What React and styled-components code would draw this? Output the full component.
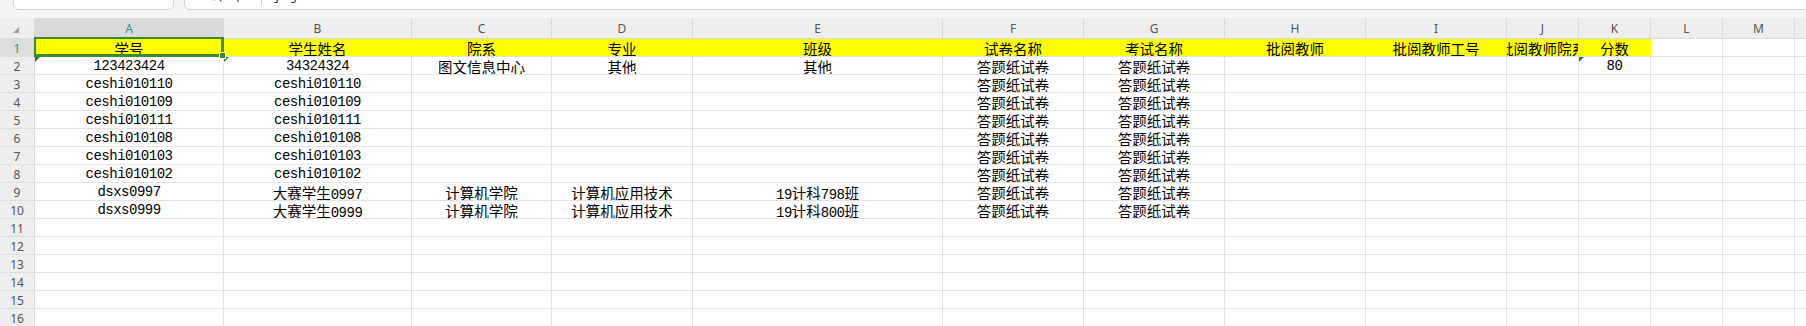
import React from 'react';
import styled, { createGlobalStyle } from 'styled-components';
import { Search } from 'lucide-react';

const Global = createGlobalStyle`
  html, body { margin: 0; padding: 0; background: #ffffff; overflow: hidden; }
  #root { width: 1806px; height: 326px; overflow: hidden; }
`;

const GREEN = '#3b8a2c';
const ACCENT = '#1f9b7b';
const GRID = '#e2e2e2';
const YELLOW = '#ffff00';

const COLS = [
  { key: 'A', w: 189 }, { key: 'B', w: 188 }, { key: 'C', w: 140 }, { key: 'D', w: 141 },
  { key: 'E', w: 250 }, { key: 'F', w: 141 }, { key: 'G', w: 141 }, { key: 'H', w: 141 },
  { key: 'I', w: 141 }, { key: 'J', w: 72 }, { key: 'K', w: 72 }, { key: 'L', w: 72 },
  { key: 'M', w: 72 }, { key: 'N', w: 72 },
];

const HEAD = ['学号', '学生姓名', '院系', '专业', '班级', '试卷名称', '考试名称', '批阅教师', '批阅教师工号', '批阅教师院系', '分数'];
const P = '答题纸试卷';
const DATA = [
  ['123423424', '34324324', '图文信息中心', '其他', '其他', P, P, '', '', '', '80'],
  ['ceshi010110', 'ceshi010110', '', '', '', P, P],
  ['ceshi010109', 'ceshi010109', '', '', '', P, P],
  ['ceshi010111', 'ceshi010111', '', '', '', P, P],
  ['ceshi010108', 'ceshi010108', '', '', '', P, P],
  ['ceshi010103', 'ceshi010103', '', '', '', P, P],
  ['ceshi010102', 'ceshi010102', '', '', '', P, P],
  ['dsxs0997', '大赛学生0997', '计算机学院', '计算机应用技术', '19计科798班', P, P],
  ['dsxs0999', '大赛学生0999', '计算机学院', '计算机应用技术', '19计科800班', P, P],
];
const ROWS = [HEAD, ...DATA, [], [], [], [], [], []];
// cells holding numbers stored as text (green corner marker)
const MARKED = new Set(['2-0', '2-1', '2-10']);

const Page = styled.div`
  width: 1806px;
  height: 326px;
  overflow: hidden;
  display: flex;
  flex-direction: column;
  background: #fff;
`;

const Toolbar = styled.div`
  height: 18px;
  flex: none;
  display: flex;
  align-items: flex-start;
  gap: 10px;
  padding-left: 13px;
  background: #f5f5f5;
  overflow: hidden;
`;

const Box = styled.div`
  height: 31px;
  margin-top: -21px;
  box-sizing: border-box;
  background: #fff;
  border: 1px solid #d2d2d2;
  border-radius: 6px;
  display: flex;
  align-items: center;
  font-family: 'Noto Sans', 'Noto Sans CJK SC', sans-serif;
  font-size: 13px;
  color: #333;
`;

const NameBox = styled(Box)`
  width: 161px;
  justify-content: center;
`;

const FormulaBox = styled(Box)`
  flex: 1;
  margin-right: -20px;
  padding-left: 22px;
`;

const Fx = styled.span`
  margin-left: 14px;
  font-style: italic;
  font-family: 'Liberation Serif', serif;
  font-size: 14px;
  color: #444;
`;

const Divider = styled.span`
  width: 1px;
  height: 20px;
  background: #cfcfcf;
  margin: 0 8px 0 14px;
`;

const Sheet = styled.div`
  display: grid;
  grid-template-columns: 35px ${COLS.map((c) => `${c.w}px`).join(' ')};
  grid-template-rows: 21px repeat(16, 18px);
  font-family: 'Liberation Mono', 'Noto Sans CJK SC', monospace;
  font-size: 14px;
  color: #000;
`;

const HeadBase = styled.div`
  box-sizing: border-box;
  display: flex;
  align-items: center;
  justify-content: center;
  font-family: 'Noto Sans', 'Open Sans', sans-serif;
  font-size: 12px;
  border-right: 1px solid #d8d8d8;
  border-bottom: 1px solid #dadada;
`;

const Corner = styled(HeadBase)`
  background: #eeeeee;
`;

const SelectAll = styled.span`
  width: 0;
  height: 0;
  margin: 4px 0 0 -2px;
  border-left: 6px solid transparent;
  border-bottom: 6px solid #9a9a9a;
`;

const ColHead = styled(HeadBase)`
  background: ${(p) => (p.$active ? '#dadada' : '#eeeeee')};
  color: ${(p) => (p.$active ? ACCENT : '#555')};
  padding-top: 1px;
`;

const RowHead = styled(HeadBase)`
  background: ${(p) => (p.$active ? '#dcdcdc' : '#eeeeee')};
  color: ${(p) => (p.$active ? ACCENT : '#555')};
  border-bottom-color: #dedede;
  padding-top: 1px;
`;

const Cell = styled.div`
  position: relative;
  box-sizing: border-box;
  display: flex;
  align-items: center;
  justify-content: center;
  overflow: ${(p) => (p.$selected ? 'visible' : 'hidden')};
  white-space: nowrap;
  background: ${(p) => p.$fill || '#fff'};
  border-right: 1px solid ${(p) => p.$fill || GRID};
  border-bottom: 1px solid ${GRID};
  padding-top: 1px;
  z-index: ${(p) => (p.$selected ? 2 : 'auto')};
`;

const CellText = styled.span`
  flex: none;
  letter-spacing: -0.5px;
`;

const Han = styled.span`
  font-family: 'Noto Sans CJK SC', sans-serif;
  font-size: 14.5px;
  letter-spacing: 0;
`;

const Marker = styled.span`
  position: absolute;
  left: 0;
  top: 0;
  width: 0;
  height: 0;
  border-top: 5px solid #2f7d24;
  border-right: 5px solid transparent;
`;

const Selection = styled.div`
  position: absolute;
  left: -1px;
  top: -2px;
  right: -1px;
  bottom: -1px;
  border: 2px solid ${GREEN};
  border-right-width: 3px;
  border-bottom-width: 3px;
  pointer-events: none;
`;

const Handle = styled.span`
  position: absolute;
  right: -5px;
  bottom: -5px;
  width: 5px;
  height: 5px;
  background: ${GREEN};
  border: 1px solid #fff;
`;

const renderText = (t) =>
  t
    .split(/([\u2E80-\u9FFF\uFF00-\uFFEF]+)/)
    .filter(Boolean)
    .map((s, i) =>
      /[\u2E80-\u9FFF\uFF00-\uFFEF]/.test(s) ? <Han key={i}>{s}</Han> : <React.Fragment key={i}>{s}</React.Fragment>
    );

export default function App() {
  return (
    <Page>
      <Global />
      <Toolbar>
        <NameBox>A1</NameBox>
        <FormulaBox>
          <Search size={16} color="#555" strokeWidth={1.6} />
          <Fx>fx</Fx>
          <Divider />
          <Han>学号</Han>
        </FormulaBox>
      </Toolbar>
      <Sheet>
        <Corner>
          <SelectAll />
        </Corner>
        {COLS.map((c, ci) => (
          <ColHead key={c.key} $active={ci === 0}>
            {c.key}
          </ColHead>
        ))}
        {ROWS.map((row, ri) => {
          const r = ri + 1;
          return (
            <React.Fragment key={r}>
              <RowHead $active={r === 1}>{r}</RowHead>
              {COLS.map((c, ci) => {
                const text = row[ci] || '';
                const fill = r === 1 && ci < HEAD.length ? YELLOW : undefined;
                const selected = r === 1 && ci === 0;
                return (
                  <Cell key={c.key} $fill={fill} $selected={selected}>
                    {MARKED.has(`${r}-${ci}`) && <Marker />}
                    {text && <CellText>{renderText(text)}</CellText>}
                    {selected && (
                      <Selection>
                        <Handle />
                      </Selection>
                    )}
                  </Cell>
                );
              })}
            </React.Fragment>
          );
        })}
      </Sheet>
    </Page>
  );
}
